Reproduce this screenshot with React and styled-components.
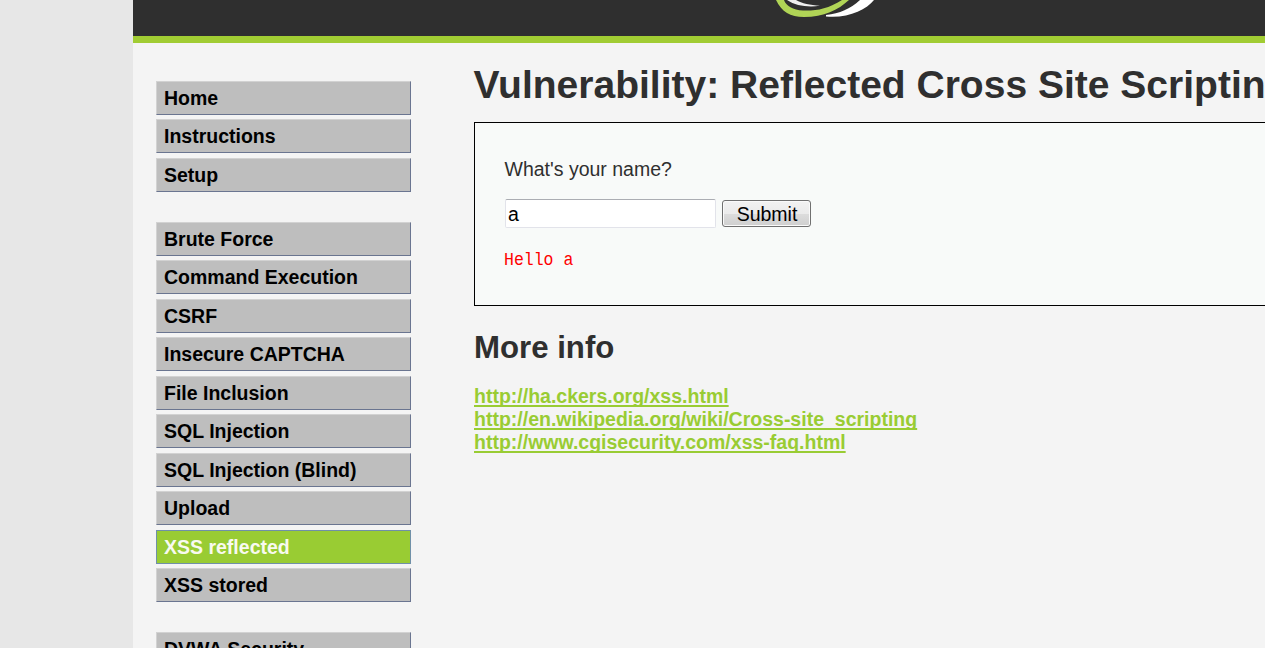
import React from "react";
import styled, { createGlobalStyle } from "styled-components";

const Global = createGlobalStyle`
  * { box-sizing: border-box; }
  html, body { margin: 0; overflow: hidden; }
  body { background: #e7e7e7; font-family: "Liberation Sans", Arial, sans-serif; color: #2f2f2f; }
`;
const Page = styled.div`
  height: 648px; padding-left: 133px; overflow: hidden;
`;
const Container = styled.div`
  height: 648px; background: #f4f4f4; overflow: hidden;
`;
const Header = styled.header`
  height: 43px; background: #2f2f2f; border-bottom: 7px solid #a1cc33;
  padding-left: 637px;
  svg { display: block; }
`;
const Body = styled.div`
  display: flex; align-items: flex-start;
`;
const Menu = styled.nav`
  width: 255px; flex: none; margin: 38px 0 0 23px;
`;
const MenuGroup = styled.ul`
  list-style: none; margin: 0 0 30px; padding: 0;
  display: flex; flex-direction: column; gap: 4.47px;
`;
const MenuItem = styled.li`
  height: 34px; flex: none; padding-left: 7px; line-height: 32px;
  font-size: 19.5px; font-weight: bold; white-space: nowrap;
  color: ${(p) => (p.$selected ? "#f8faf0" : "#000")};
  background: ${(p) => (p.$selected ? "#99cc33" : "#bebebe")};
  border: 1px solid;
  border-color: ${(p) => (p.$selected ? "#7090a8" : "#d2d2d2 #6a7590 #6a7590 #d2d2d2")};
`;
const Main = styled.main`
  margin: 19px 0 0 63px; flex: none; width: 830px;
`;
const Title = styled.h1`
  margin: 0; font-size: 39.03px; line-height: 46px; white-space: nowrap; text-indent: -0.5px;
`;
const Panel = styled.section`
  margin-top: 14px; height: 184px; padding: 34px 30px;
  border: 1px solid #000; background: #f8faf9;
`;
const Prompt = styled.p`
  margin: 0; font-size: 19.5px; line-height: 24px; text-indent: -0.5px;
`;
const Form = styled.form`
  display: flex; align-items: center; gap: 6px; margin-top: 18px;
`;
const Input = styled.input`
  width: 211px; height: 29px; padding: 3px 2px 1px; border: 1px solid #e2e3ea; border-top-color: #abadb3;
  border-radius: 2px;
  font: 19.5px "Liberation Sans", Arial, sans-serif; color: #000; background: #fff; outline: 0;
`;
const Button = styled.button`
  width: 89px; height: 27px; padding: 0 0 0 1px; border: 1px solid #707070; border-radius: 3px;
  background: linear-gradient(#f2f2f2, #ebebeb 50%, #dddddd 50%, #cfcfcf);
  box-shadow: inset 0 0 0 1px #fafafa;
  font: 19.5px/24px "Liberation Sans", Arial, sans-serif; color: #000;
`;
const Result = styled.pre`
  margin: 19px 0 0 -1px; color: #f00; font: 19px/26px "Liberation Mono", monospace;
  width: max-content; transform: scaleX(0.868); transform-origin: left;
`;
const Subtitle = styled.h2`
  margin: 24px 0 0; font-size: 31.2px; line-height: 36px;
`;
const Links = styled.ul`
  list-style: none; margin: 19px 0 0; padding: 0; font-size: 19.5px; line-height: 23px; font-weight: bold;
`;
const Link = styled.a`
  color: #99cc33; text-decoration: underline 2px; text-decoration-skip-ink: none; text-underline-offset: 2px;
`;

const groups = [
  ["Home", "Instructions", "Setup"],
  ["Brute Force", "Command Execution", "CSRF", "Insecure CAPTCHA", "File Inclusion", "SQL Injection",
    "SQL Injection (Blind)", "Upload", "XSS reflected", "XSS stored"],
  ["DVWA Security"],
];
const links = [
  "http://ha.ckers.org/xss.html",
  "http://en.wikipedia.org/wiki/Cross-site_scripting",
  "http://www.cgisecurity.com/xss-faq.html",
];

export default function App() {
  return (
    <Page>
      <Global />
      <Container>
        <Header>
          <svg width="110" height="20" viewBox="0 0 110 20">
            <path d="M6 0C12 12 20 17 34 17C54 17 68 10 79 0H72C58 9 46 11 33 10.5C23 10 16 6 14 0Z" fill="#b0d456" />
            <path d="M17 0C26 6 38 7.5 50 5.8C40 5 32 3.5 26 0Z" fill="#eee" />
            <path d="M56 16.5C78 18.5 96 10 104 0H90C80 9 70 13.5 56 15Z" fill="#fff" />
          </svg>
        </Header>
        <Body>
          <Menu>
            {groups.map((items) => (
              <MenuGroup key={items[0]}>
                {items.map((t) => <MenuItem key={t} $selected={t === "XSS reflected"}>{t}</MenuItem>)}
              </MenuGroup>
            ))}
          </Menu>
          <Main>
            <Title>Vulnerability: Reflected Cross Site Scripting (XSS)</Title>
            <Panel>
              <Prompt>What's your name?</Prompt>
              <Form onSubmit={(e) => e.preventDefault()}>
                <Input defaultValue="a" />
                <Button>Submit</Button>
              </Form>
              <Result>Hello a</Result>
            </Panel>
            <Subtitle>More info</Subtitle>
            <Links>
              {links.map((l) => <li key={l}><Link href={l}>{l}</Link></li>)}
            </Links>
          </Main>
        </Body>
      </Container>
    </Page>
  );
}
